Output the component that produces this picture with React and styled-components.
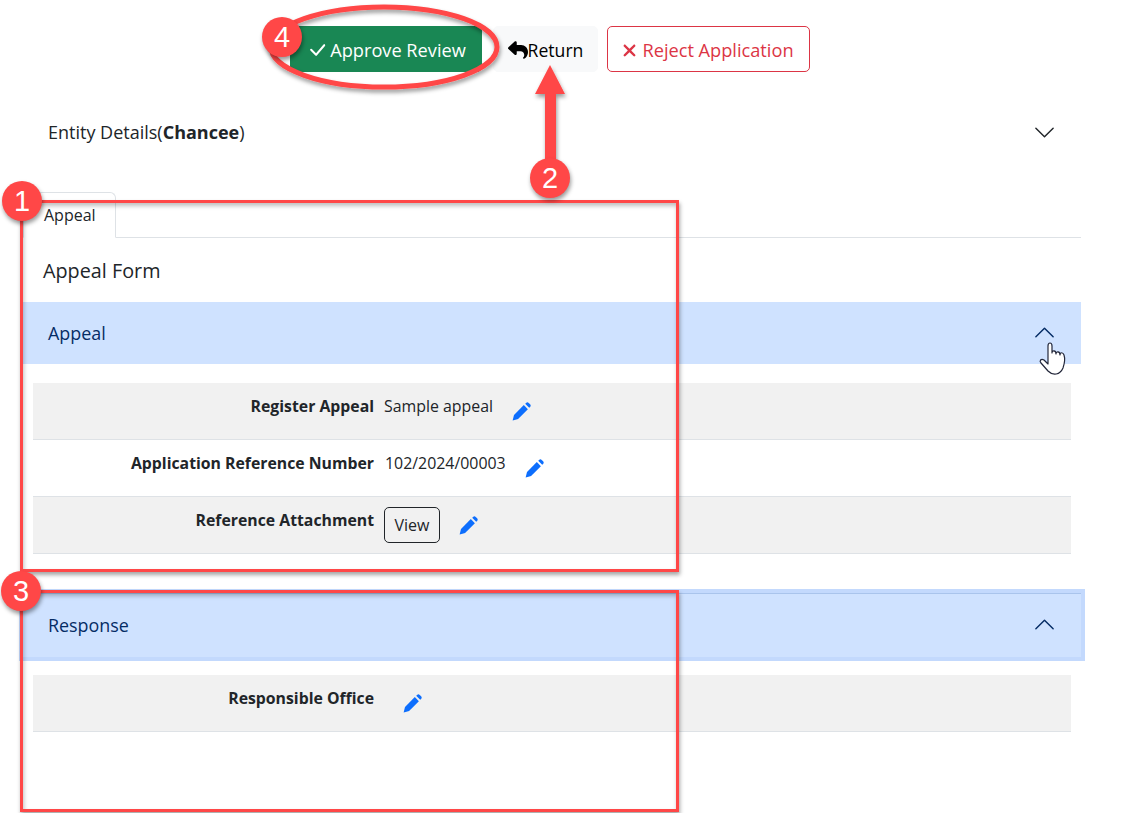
import React from 'react';
import styled, { createGlobalStyle } from 'styled-components';
import { FaReply, FaXmark } from 'react-icons/fa6';
import { BsCheckLg, BsChevronDown, BsChevronUp } from 'react-icons/bs';

const GlobalStyle = createGlobalStyle`
  html, body { margin: 0; padding: 0; background: #fff; }
  body { font-family: "Open Sans", "Noto Sans", sans-serif; color: #212529; overflow: hidden; }
  * { box-sizing: border-box; }
`;

const rows = [
  { label: 'Register Appeal', value: 'Sample appeal' },
  { label: 'Application Reference Number', value: '102/2024/00003', shift: true },
  { label: 'Reference Attachment', button: 'View' },
];

function PencilIcon() {
  return (
    <svg width="19" height="19" viewBox="0 0 19 19" fill="currentColor">
      <path d="M.6 18.4 2 12.9 11.8 3.1 15.9 7.2 6.1 17Q3.6 17.9.6 18.4Z" />
      <path d="M13.2 1.8 14.1.9a1.9 1.9 0 0 1 2.6 0l1.4 1.4a1.9 1.9 0 0 1 0 2.6l-.9.9Z" />
    </svg>
  );
}

export default function App() {
  return (
    <Page>
      <GlobalStyle />
      <Toolbar>
        <ApproveButton><BsCheckLg size={22} />Approve Review</ApproveButton>
        <ReturnButton><FaReply size={20} />Return</ReturnButton>
        <RejectButton><FaXmark size={19} />Reject Application</RejectButton>
      </Toolbar>

      <Main>
        <EntityHeader>
          <span>Entity Details(<b>Chancee</b>)</span>
          <BsChevronDown size={23} color="#212529" />
        </EntityHeader>

        <TabBar><Tab>Appeal</Tab></TabBar>
        <FormTitle>Appeal Form</FormTitle>

        <AccordionHeader>
          <span>Appeal</span>
          <BsChevronUp size={23} />
        </AccordionHeader>
        <AccordionBody>
          {rows.map((row) => (
            <Row key={row.label}>
              <Label>{row.label}</Label>
              <Value $shift={row.shift}>
                {row.value && <span>{row.value}</span>}
                {row.button && <ViewButton>{row.button}</ViewButton>}
                <Pencil><PencilIcon /></Pencil>
              </Value>
            </Row>
          ))}
        </AccordionBody>

        <AccordionHeader $focused>
          <span>Response</span>
          <BsChevronUp size={23} />
        </AccordionHeader>
        <ResponseBody>
          <Row>
            <Label>Responsible Office</Label>
            <Value><Pencil><PencilIcon /></Pencil></Value>
          </Row>
        </ResponseBody>
      </Main>

      {/* screenshot annotations */}
      <HighlightBox $top={200} $height={372} />
      <HighlightBox $top={590} $height={222} />
      <Marks width="1124" height="813" viewBox="0 0 1124 813">
        <defs>
          <filter id="drop" x="-20%" y="-20%" width="140%" height="140%">
            <feDropShadow dx="1" dy="3" stdDeviation="2" floodColor="#000" floodOpacity="0.4" />
          </filter>
        </defs>
        <ellipse cx="384" cy="47" rx="113" ry="40" fill="none" stroke="#ff4747" strokeWidth="5" filter="url(#drop)" />
        <path d="M545 160 L545 94 L535 94 L550 65 L565 94 L556 94 L556 160 Z" fill="#ff4747" filter="url(#drop)" />
        <path
          d="M1048 371 C1053 376 1060 375 1063 368 C1065 362 1065 358 1064 355 C1063 352 1060 352 1060 355 C1060 351 1056 351 1056 354 C1056 350 1052 350 1052 353 L1052 346 C1052 342 1048 342 1048 346 L1048 364 L1044 360 C1041 358 1039 361 1041 363 Z"
          fill="#fff"
          stroke="#23273a"
          strokeWidth="1.2"
          strokeLinejoin="round"
        />
      </Marks>
      <Badge $x={22} $y={201}>1</Badge>
      <Badge $x={550} $y={178}>2</Badge>
      <Badge $x={21} $y={591}>3</Badge>
      <Badge $x={282} $y={37}>4</Badge>
    </Page>
  );
}

const Page = styled.div`
  position: relative;
  width: 1124px;
  height: 813px;
  padding-top: 26px;
  overflow: hidden;
`;

const Toolbar = styled.div`
  display: flex;
  height: 46px;
  padding-left: 290px;
`;

const ActionButton = styled.button`
  display: flex;
  align-items: center;
  justify-content: center;
  height: 46px;
  padding: 2px 0 0;
  font: 400 18.2px "Open Sans", sans-serif;
  border-radius: 5px;
  cursor: pointer;
`;

const ApproveButton = styled(ActionButton)`
  width: 192px;
  gap: 2px;
  background: #198754;
  border: 1px solid #198754;
  color: #fff;
`;

const ReturnButton = styled(ActionButton)`
  width: 105px;
  margin-left: 11px;
  font-size: 17.6px;
  background: #f8f9fa;
  border: 1px solid #f8f9fa;
  color: #000;
`;

const RejectButton = styled(ActionButton)`
  width: 203px;
  margin-left: 9px;
  gap: 3px;
  padding-right: 3px;
  background: #fff;
  border: 1px solid #dc3545;
  color: #dc3545;
`;

const Main = styled.div`
  width: 1058px;
  margin-left: 23px;
`;

const EntityHeader = styled.div`
  display: flex;
  align-items: center;
  justify-content: space-between;
  height: 62px;
  margin-top: 30px;
  padding: 0 25px 2px;
  font-size: 18px;
  b { font-weight: 700; }
`;

const TabBar = styled.div`
  display: flex;
  height: 46px;
  margin-top: 28px;
  border-bottom: 1px solid #dee2e6;
`;

const Tab = styled.div`
  width: 93px;
  height: 46px;
  padding: 13px 0 0 20px;
  font-size: 16px;
  line-height: 19px;
  background: #fff;
  border: 1px solid #dee2e6;
  border-bottom-color: #fff;
  border-radius: 6px 6px 0 0;
`;

const FormTitle = styled.div`
  height: 64px;
  padding: 20px 0 0 20px;
  font-size: 19.8px;
  line-height: 26px;
`;

const AccordionHeader = styled.div`
  display: flex;
  align-items: center;
  justify-content: space-between;
  height: ${(p) => (p.$focused ? '64px' : '62px')};
  padding: 0 25px 1px;
  font-size: 17.9px;
  color: #052c65;
  background: #cfe2ff;
  box-shadow: ${(p) => (p.$focused ? '0 0 0 4px #c3d9fd, inset 0 1px 0 #a9c4ec' : 'none')};
`;

const AccordionBody = styled.div`
  padding: 19px 10px 39px;
`;

const ResponseBody = styled.div`
  padding: 18px 10px 0;
`;

const Row = styled.div`
  display: flex;
  align-items: flex-start;
  height: 57px;
  padding-top: 12px;
  border-bottom: 1px solid #dee2e6;
  font-size: 15.9px;
  line-height: 22px;
  &:nth-child(odd) { background: #f1f1f1; }
`;

const Label = styled.div`
  width: 341px;
  text-align: right;
  font-size: 15.8px;
  font-weight: 700;
`;

const Value = styled.div`
  display: flex;
  align-items: flex-start;
  margin-left: ${(p) => (p.$shift ? '11px' : '10px')};
`;

const ViewButton = styled.button`
  width: 56px;
  height: 36px;
  margin-top: -2px;
  padding: 0;
  font: 400 16px "Open Sans", sans-serif;
  color: #212529;
  background: transparent;
  border: 1px solid #212529;
  border-radius: 5px;
`;

const Pencil = styled.span`
  display: flex;
  margin: 7px 0 0 19px;
  color: #0d6efd;
`;

const HighlightBox = styled.div`
  position: absolute;
  left: 20px;
  top: ${(p) => p.$top}px;
  width: 659px;
  height: ${(p) => p.$height}px;
  border: 3px solid #ff4747;
  box-shadow: 1px 3px 4px rgba(0, 0, 0, 0.35), inset 1px 3px 4px rgba(0, 0, 0, 0.25);
`;

const Marks = styled.svg`
  position: absolute;
  left: 0;
  top: 0;
  pointer-events: none;
`;

const Badge = styled.div`
  position: absolute;
  left: ${(p) => p.$x - 20}px;
  top: ${(p) => p.$y - 20}px;
  width: 40px;
  height: 40px;
  display: flex;
  align-items: center;
  justify-content: center;
  font: 400 29px "Liberation Sans", sans-serif;
  color: #fff;
  background: #ff4747;
  border-radius: 50%;
  box-shadow: 1px 3px 4px rgba(0, 0, 0, 0.4);
`;
